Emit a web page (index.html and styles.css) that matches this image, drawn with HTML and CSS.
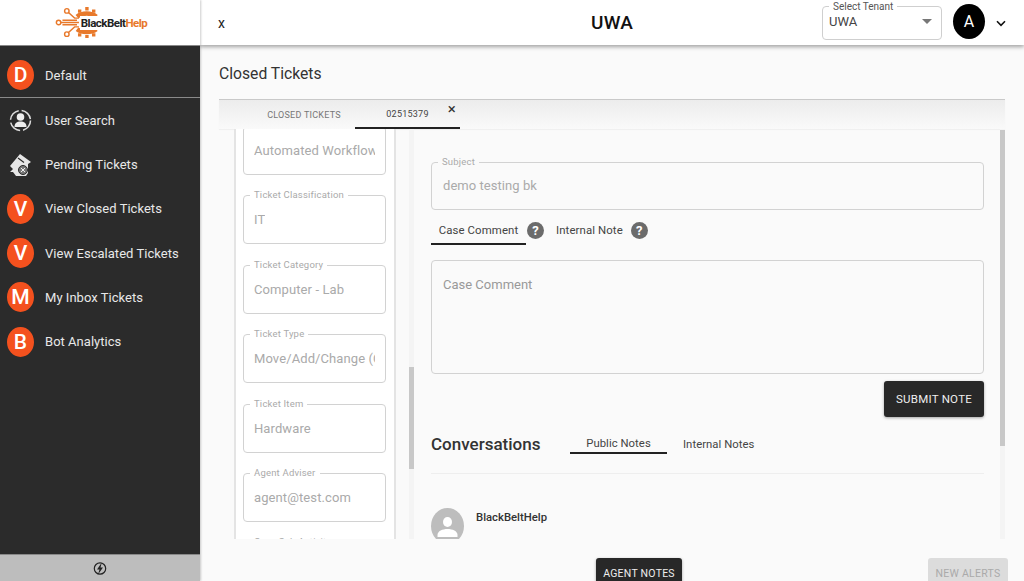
FILE: index.html
```html
<!DOCTYPE html>
<html lang="en">
<head>
<meta charset="utf-8">
<title>UWA - Closed Tickets</title>
<link rel="stylesheet" href="styles.css">
</head>
<body>
<div class="app">
  <aside class="sidebar">
    <div class="brand">
      <svg class="brand-mark" width="44" height="31" viewBox="0 0 44 32" fill="none" stroke="#e8792b" stroke-width="1.5">
        <circle cx="3" cy="16" r="2.300"/>
        <circle cx="11.500" cy="4" r="2.300"/>
        <circle cx="11.500" cy="28" r="2.300"/>
        <path d="M5.500 16H24M7 13.600H22M7 18.400H22M13.200 5.700L19.500 11.500H24M13.200 26.300L19.500 20.500H24"/>
        <path d="M22 10A13 9 0 0 1 42 10" stroke-width="4.500"/>
        <path d="M22 23A13 8 0 0 0 42 23" stroke-width="4.500"/>
        <path d="M23 2.500h3.500v3.500H23zM37.500 2.500H41V6h-3.500zM23 27h3.500v3.500H23zM37.500 27H41v3.500h-3.500zM30.500 0h3.500v3.500h-3.500zM30.500 29h3.500v3h-3.500z" fill="#e8792b" stroke="none"/>
      </svg>
      <span class="brand-name">BlackBelt<span class="brand-help">Help</span></span>
    </div>
    <div class="side-default">
      <span class="badge">D</span><span class="side-label">Default</span>
    </div>
    <nav class="side-nav">
      <a class="side-item">
        <svg class="side-icon" width="27" height="27" viewBox="0 0 27 27" fill="none">
          <circle cx="13.500" cy="13.500" r="10" stroke="#ddd" stroke-width="1.500" stroke-dasharray="13 3"/>
          <circle cx="13.500" cy="10" r="3.800" fill="#eee"/>
          <path d="M7.500 20c0-4 2.500-5.500 6-5.500s6 1.500 6 5.500z" fill="#eee"/>
        </svg>
        <span class="side-label">User Search</span>
      </a>
      <a class="side-item">
        <svg class="side-icon" width="27" height="27" viewBox="0 0 27 27" fill="none">
          <path d="M3 15L13 3l11 8-3 2v9l-2 3H9l-3-4H3l3-3z" fill="#e6e6e6"/>
          <path d="M11 7l6 4.500" stroke="#2b2b2b" stroke-width="1.200"/>
          <circle cx="16" cy="19" r="4.500" fill="#777" stroke="#2b2b2b"/>
          <path d="M14 17l4 4M18 17l-4 4" stroke="#eee"/>
        </svg>
        <span class="side-label">Pending Tickets</span>
      </a>
      <a class="side-item"><span class="badge">V</span><span class="side-label">View Closed Tickets</span></a>
      <a class="side-item"><span class="badge">V</span><span class="side-label">View Escalated Tickets</span></a>
      <a class="side-item"><span class="badge">M</span><span class="side-label">My Inbox Tickets</span></a>
      <a class="side-item"><span class="badge">B</span><span class="side-label">Bot Analytics</span></a>
    </nav>
    <div class="side-foot">
      <svg width="14" height="15" viewBox="0 0 14 15" fill="none">
        <circle cx="7" cy="7.500" r="5.700" stroke="#222" stroke-width="1.200"/>
        <path d="M8.800 1.500L4 8.500h2.500L5 13.500 10 6.500H7.500z" fill="#222"/>
      </svg>
    </div>
  </aside>

  <div class="main">
    <header class="topbar">
      <span class="close-x">x</span>
      <h1 class="tenant-title">UWA</h1>
      <div class="topbar-right">
        <div class="select">
          <span class="select-label">Select Tenant</span>
          <span class="select-value">UWA</span>
          <span class="select-caret"></span>
        </div>
        <span class="avatar">A</span>
        <svg class="chevron" width="10" height="7" viewBox="0 0 10 7" fill="none"><path d="M1 1.300L5 5.300 9 1.300" stroke="#111" stroke-width="1.600"/></svg>
      </div>
    </header>

    <div class="content">
      <h2 class="page-title">Closed Tickets</h2>
      <div class="tabs">
        <span class="tab">CLOSED TICKETS</span>
        <span class="tab tab-active">02515379<span class="tab-close">×</span></span>
      </div>
      <div class="panels">
        <section class="left-wrap">
          <div class="left-panel">
            <div class="fields">
              <div class="field"><span class="field-value">Automated Workflow</span></div>
              <div class="field"><span class="field-label">Ticket Classification</span><span class="field-value">IT</span></div>
              <div class="field"><span class="field-label">Ticket Category</span><span class="field-value">Computer - Lab</span></div>
              <div class="field"><span class="field-label">Ticket Type</span><span class="field-value">Move/Add/Change (Co</span></div>
              <div class="field"><span class="field-label">Ticket Item</span><span class="field-value">Hardware</span></div>
              <div class="field"><span class="field-label">Agent Adviser</span><span class="field-value">agent@test.com</span></div>
              <div class="field"><span class="field-label">Case Sub-Activity</span></div>
            </div>
          </div>
          <div class="track track-left"><span class="thumb thumb-left"></span></div>
        </section>

        <section class="right-panel">
          <div class="right-body">
            <div class="field field-wide"><span class="field-label">Subject</span><span class="field-value">demo testing bk</span></div>
            <div class="note-tabs">
              <span class="note-tab note-tab-active">Case Comment</span>
              <span class="help">?</span>
              <span class="note-tab">Internal Note</span>
              <span class="help">?</span>
            </div>
            <div class="comment-box">Case Comment</div>
            <div class="submit-row"><button class="btn btn-dark" type="button">SUBMIT NOTE</button></div>
            <div class="conv-head">
              <h3 class="conv-title">Conversations</h3>
              <span class="conv-tab conv-tab-active">Public Notes</span>
              <span class="conv-tab">Internal Notes</span>
            </div>
            <div class="message">
              <svg class="msg-avatar" width="33" height="36" viewBox="0 0 33 36">
                <ellipse cx="16.500" cy="18" rx="16.500" ry="18" fill="#bdbdbd"/>
                <ellipse cx="16.500" cy="14" rx="4.500" ry="5" fill="#fff"/>
                <path d="M6.500 27c0-4 5-6 10-6s10 2 10 6v2h-20z" fill="#fff"/>
              </svg>
              <span class="msg-author">BlackBeltHelp</span>
            </div>
          </div>
          <div class="track track-right"><span class="thumb thumb-right"></span></div>
        </section>
      </div>
      <div class="actions">
        <button class="btn btn-dark btn-cut" type="button">AGENT NOTES</button>
        <button class="btn btn-disabled btn-cut" type="button">NEW ALERTS</button>
      </div>
    </div>
  </div>
</div>
</body>
</html>
```
FILE: styles.css
```css
* { box-sizing: border-box; }
html, body { margin: 0; height: 100%; overflow: hidden; }
body { font-family: Roboto, "Liberation Sans", sans-serif; background: #fafafa; color: #222; }
h1, h2, h3 { margin: 0; font-weight: 400; }

.app { display: flex; height: 581px; }

/* Sidebar */
.sidebar { width: 200px; flex: none; display: flex; flex-direction: column; background: #2b2b2b; color: #eee; box-shadow: 1px 0 2px rgba(0,0,0,.2); z-index: 3; }
.brand { height: 46px; flex: none; background: #fff; display: flex; align-items: center; justify-content: center; padding: 0 0 0 3px; border-bottom: 1px solid #888; }
.brand-mark { margin-right: -19px; }
.brand-name { font-size: 11.500px; font-weight: 700; letter-spacing: -.5px; color: #222; background: #fff; padding: 0 1px; margin-top: 1px; position: relative; }
.brand-help { color: #e8792b; }
.side-default { height: 52px; flex: none; display: flex; align-items: center; padding: 7px 0 0 7px; border-bottom: 1px solid #8a8a8a; }
.side-nav { flex: 1; min-height: 0; }
.side-item { height: 44.300px; display: flex; align-items: center; padding-left: 7px; }
.badge { width: 27px; height: 30px; flex: none; border-radius: 50%; background: #f4511e; color: #fff; font-size: 21px; font-weight: 500; display: flex; align-items: center; justify-content: center; }
.side-icon { flex: none; width: 27px; }
.side-label { margin-left: 11px; font-size: 13px; letter-spacing: .03px; color: #e8e8e8; }
.side-foot { height: 27px; flex: none; background: #bdbdbd; border-top: 1px solid #888; display: flex; align-items: center; justify-content: center; }

/* Main */
.main { flex: 1; min-width: 0; display: flex; flex-direction: column; }
.topbar { height: 45px; flex: none; background: #fff; display: grid; grid-template-columns: 1fr auto 1fr; align-items: center; padding: 0 18px; box-shadow: 0 2px 4px rgba(0,0,0,.35); position: relative; z-index: 2; }
.close-x { font-size: 14px; color: #222; }
.tenant-title { font-size: 19px; font-weight: 500; color: #111; letter-spacing: .2px; }
.topbar-right { display: flex; align-items: center; justify-content: flex-end; }
.select { position: relative; width: 120px; height: 34px; margin-top: 1px; border: 1px solid #cfcfcf; border-radius: 4px; display: flex; align-items: center; padding: 0 6px 3px; }
.select-label { position: absolute; left: 6px; top: -6px; padding: 0 4px; background: #fff; font-size: 10px; color: #555; line-height: 12px; }
.select-value { font-size: 13px; color: #444; }
.select-caret { position: absolute; right: 9px; top: 12px; border: 5px solid transparent; border-top-color: #777; border-bottom: 0; }
.avatar { width: 32px; height: 35px; margin: 0 0 2px 11px; border-radius: 50%; background: #000; color: #fff; display: flex; align-items: center; justify-content: center; font-size: 16px; }
.chevron { margin-left: 11px; margin-top: 2px; }

.content { flex: 1; min-height: 0; display: flex; flex-direction: column; padding: 0 19px; }
.page-title { font-size: 15.700px; color: #333; height: 54px; flex: none; padding-top: 19px; line-height: 19px; }
.tabs { height: 30px; flex: none; display: flex; border-top: 1px solid #c9c9c9; background: linear-gradient(#ececec, #fafafa); padding-left: 34px; box-shadow: 0 1px 1px #f0f0f0; }
.tab { width: 102px; display: flex; align-items: center; justify-content: center; font-size: 9px; color: #777; letter-spacing: .25px; position: relative; }
.tab-active { width: 105px; border-bottom: 2px solid #222; color: #444; }
.tab-close { position: absolute; right: 4px; top: 1px; font-size: 15px; line-height: 16px; color: #333; }
.panels { height: 410px; flex: none; display: flex; overflow: hidden; }

/* Left details column */
.left-wrap { width: 196px; flex: none; display: flex; padding-left: 15px; }
.left-panel { width: 162px; flex: none; background: #fff; border: solid #e4e4e4; border-width: 0 2px; overflow: hidden; padding: 0 8px 0 7px; }
.fields { margin-top: -3px; }
.field { position: relative; height: 49px; margin-bottom: 20.400px; border: 1px solid #d2d2d2; border-radius: 4px; display: flex; align-items: center; padding: 0 10px; background: #fff; }
.field-label { position: absolute; left: 6px; top: -7px; padding: 0 4px; background: #fff; font-size: 9.500px; line-height: 11px; letter-spacing: .2px; color: #aaa; white-space: nowrap; }
.field-value { font-size: 13px; color: #aaa; white-space: nowrap; overflow: hidden; letter-spacing: .1px; }
.track { width: 5px; flex: none; background: #f4f4f4; position: relative; }
.track-left { margin-left: 13px; }
.track-right { margin-left: 16px; }
.thumb { display: block; position: absolute; left: 0; width: 5px; background: #c8c8c8; }
.thumb-left { top: 238px; height: 102px; }
.thumb-right { top: 1px; height: 316px; }

/* Right column */
.right-panel { flex: 1; min-width: 0; display: flex; overflow: hidden; }
.right-body { flex: 1; min-width: 0; padding: 33px 0 0 16px; }
.field-wide { background: transparent; height: 48px; margin: 0; padding: 0 11px 2px; }
.field-wide .field-label { background: #fafafa; }
.field-wide .field-value { letter-spacing: .05px; }
.note-tabs { display: flex; align-items: center; height: 35px; margin-bottom: 15px; }
.note-tab { font-size: 11.400px; color: #444; letter-spacing: .1px; height: 35px; padding-top: 5px; display: flex; align-items: center; }
.note-tab-active { width: 95px; justify-content: center; border-bottom: 2px solid #222; padding-top: 6px; }
.help { width: 17px; height: 17px; border-radius: 50%; background: #6b6b6b; color: #fff; font-size: 13px; font-weight: 700; display: flex; align-items: center; justify-content: center; margin-top: 6px; }
.help + .note-tab { margin-left: 12px; }
.note-tab + .help { margin-left: 8px; }
.note-tab-active + .help { margin-left: 1px; }
.comment-box { height: 114px; border: 1px solid #d2d2d2; border-radius: 4px; padding: 16px 11px; font-size: 13px; color: #999; }
.submit-row { display: flex; justify-content: flex-end; margin-top: 7px; }
.btn { border: 0; font-family: inherit; border-radius: 3px; font-size: 11.500px; letter-spacing: .25px; height: 36px; padding: 0; }
.btn-dark { background: #282828; color: #eee; width: 100px; box-shadow: 0 1px 3px rgba(0,0,0,.35); }
.conv-head { display: flex; align-items: center; height: 57px; border-bottom: 1px solid #eee; padding-bottom: 3px; }
.conv-title { font-size: 17px; font-weight: 500; color: #333; width: 139px; }
.conv-tab { font-size: 11.300px; color: #444; height: 23px; padding-top: 3px; margin-bottom: 2px; display: flex; align-items: center; justify-content: center; letter-spacing: .05px; }
.conv-tab-active { width: 97px; border-bottom: 2px solid #222; margin-right: 16px; }
.message { display: flex; margin-top: 34px; height: 50px; }
.msg-avatar { flex: none; }
.msg-author { font-size: 11.300px; font-weight: 500; color: #333; margin-left: 12px; margin-top: 3px; }

.actions { flex: 1; min-height: 0; position: relative; display: flex; justify-content: flex-end; padding-top: 19px; }
.btn-cut { height: 40px; border-radius: 3px 3px 0 0; display: block; padding: 0 0 9px; font-size: 10.500px; }
.btn-dark.btn-cut { position: absolute; left: 377px; width: 86px; }
.btn-disabled { background: #dcdcdc; color: #aaa; width: 80px; margin-right: -3px; }
```
